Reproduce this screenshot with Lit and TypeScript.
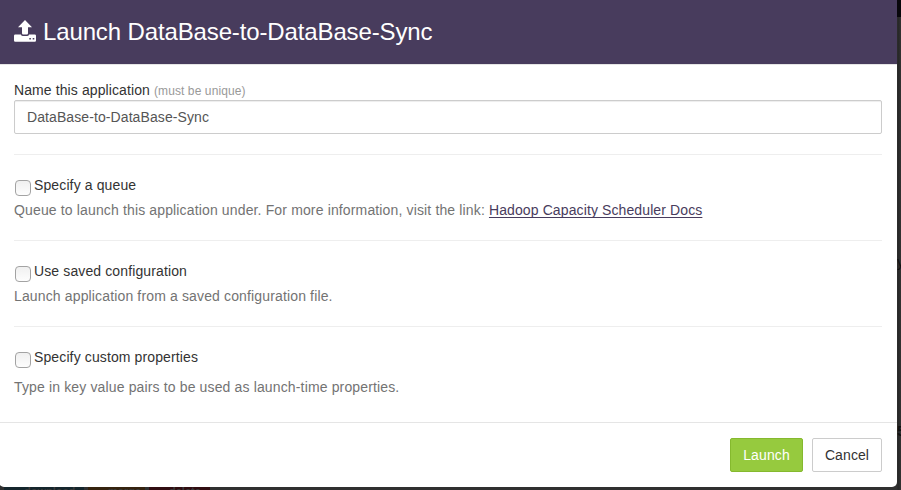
import { LitElement, html, css } from "lit";
import { customElement, property } from "lit/decorators.js";

@customElement("launch-option")
class LaunchOption extends LitElement {
  @property() label = "";
  static styles = css`
    :host { display: block; }
    .row { display: flex; height: 20px; line-height: 20px; color: #333; white-space: nowrap; letter-spacing: .12px; }
    .box {
      box-sizing: border-box; width: 16px; height: 16px; margin: 5px 3px 0 1px;
      border: 1px solid #a3a3a3; border-radius: 4px;
      background: linear-gradient(#f0f0f0, #fdfdfd); flex: none;
    }
    .help { color: #737373; line-height: 20px; margin-top: var(--help-gap, 5px); white-space: nowrap; letter-spacing: .143px; }
  `;
  render() {
    return html`<div class="row"><span class="box" role="checkbox" aria-checked="false"></span><span>${this.label}</span></div>
      <div class="help"><slot></slot></div>`;
  }
}

@customElement("app-root")
class AppRoot extends LitElement {
  static styles = css`
    :host {
      display: block; position: relative; height: 490px; overflow: hidden;
      background: linear-gradient(90deg, #303030 897px, #262626 898px, #333 901px);
      font: 14px/20px "Liberation Sans", Arial, sans-serif; color: #333;
    }
    .navbar { position: absolute; left: 897px; top: 0; width: 4px; height: 17px; background: #08070b; }
    .peek { position: absolute; left: 897px; width: 4px; overflow: hidden; color: #111; }
    .upper { top: 252px; }
    .lower { top: 421px; font-weight: bold; }
    .tags { position: absolute; left: 4px; top: 487px; height: 3px; display: flex; gap: 4px; overflow: hidden; }
    .tag { height: 3px; overflow: hidden; box-sizing: border-box; padding-left: 20px; font: bold 11px/9px "Liberation Sans", sans-serif; color: #3a3a3a; }
    .download { width: 80px; background: #15262d; }
    .merge { width: 57px; background: #35230f; }
    .delete { width: 61px; background: #310d11; }
    .modal {
      position: relative; box-sizing: border-box; width: 898px; height: 487px; margin-left: -1px;
      background: #fff; border-radius: 0 0 5px 5px; overflow: hidden;
      display: flex; flex-direction: column;
    }
    .header {
      box-sizing: border-box; height: 65px; flex: none; padding-left: 15px;
      display: flex; align-items: center; background: #483c5d; border-bottom: 1px solid #e5e5e5; color: #fff;
    }
    .header svg { width: 22px; height: 22px; margin: -2px 7px 0 0; flex: none; }
    h4 { margin: 0; font-size: 24px; line-height: 30px; font-weight: normal; white-space: nowrap; letter-spacing: -.13px; }
    .body { flex: 1; padding: 15px 15px 0; }
    .name { height: 20px; white-space: nowrap; letter-spacing: .1px; }
    small { font-size: 12px; color: #999; }
    .field {
      box-sizing: border-box; height: 34px; border: 1px solid #ccc; border-radius: 2px;
      padding: 6px 12px; color: #555; letter-spacing: .09px; box-shadow: inset 0 1px 1px rgba(0,0,0,.075);
    }
    hr { border: 0; border-top: 1px solid #eee; margin: 20px 0; }
    .wide { --help-gap: 10px; }
    a {
      color: #483c5d; letter-spacing: .11px;
      text-decoration: underline 1px; text-underline-offset: 2px; text-decoration-skip-ink: none;
    }
    .footer {
      box-sizing: border-box; height: 65px; border-top: 1px solid #e5e5e5;
      padding: 15px; display: flex; justify-content: flex-end; gap: 9px;
    }
    button {
      box-sizing: border-box; height: 34px; padding: 0; border-radius: 2px; font: inherit;
      border: 1px solid #ccc; background: #fff; color: #333; width: 70px; letter-spacing: .1px;
    }
    .primary { width: 73px; background: #96ca3e; border-color: #85b92e; color: #fff; }
  `;
  render() {
    return html`
      <div class="navbar"></div>
      <div class="peek upper">y</div>
      <div class="peek lower">5</div>
      <div class="tags"><span class="tag download">download</span><span class="tag merge">merge</span><span class="tag delete">delete</span></div>
      <div class="modal" role="dialog">
        <div class="header">
          <svg viewBox="0 0 22 22" fill="#fff">
            <path d="M11 0 18 7.3H14V13.3Q14 14.5 12.8 14.5H9.2Q8 14.5 8 13.3V7.3H4Z"/>
            <path fill-rule="evenodd" d="M1.2 14.5H6.9Q7.4 16 9 16H13Q14.6 16 15.1 14.5H20.8Q22 14.5 22 15.7V20.6Q22 21.8 20.8 21.8H1.2Q0 21.8 0 20.6V15.7Q0 14.5 1.2 14.5ZM15.3 18V19.6H16.9V18ZM18.7 18V19.6H20.3V18Z"/>
          </svg>
          <h4>Launch DataBase-to-DataBase-Sync</h4>
        </div>
        <div class="body">
          <div class="name">Name this application <small>(must be unique)</small></div>
          <div class="field" role="textbox">DataBase-to-DataBase-Sync</div>
          <hr>
          <launch-option label="Specify a queue">Queue to launch this application under. For more information, visit the link: <a>Hadoop Capacity Scheduler Docs</a></launch-option>
          <hr>
          <launch-option label="Use saved configuration">Launch application from a saved configuration file.</launch-option>
          <hr>
          <launch-option class="wide" label="Specify custom properties">Type in key value pairs to be used as launch-time properties.</launch-option>
        </div>
        <div class="footer"><button class="primary">Launch</button><button>Cancel</button></div>
      </div>`;
  }
}
